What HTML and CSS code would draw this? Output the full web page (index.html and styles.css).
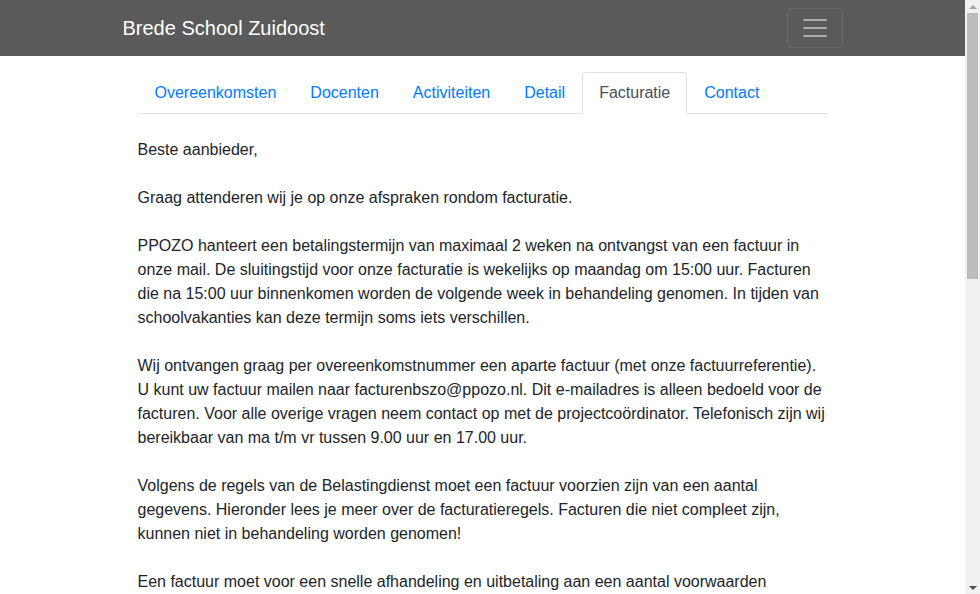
FILE: index.html
```html
<!DOCTYPE html>
<html lang="nl">
<head>
<meta charset="utf-8">
<title>Brede School Zuidoost</title>
<link rel="stylesheet" href="styles.css">
</head>
<body>
<div class="page">
  <nav class="navbar">
    <div class="container navbar-inner">
      <a class="brand" href="#">Brede School Zuidoost</a>
      <button class="toggler" type="button" aria-label="Menu">
        <svg class="toggler-icon" viewBox="0 0 30 30" width="30" height="30"><path d="M4 7h22M4 15h22M4 23h22" stroke="rgba(255,255,255,0.5)" stroke-width="2" stroke-linecap="round" stroke-miterlimit="10" fill="none"/></svg>
      </button>
    </div>
  </nav>
  <main class="container main">
    <ul class="tabs">
      <li class="tab-item"><a class="tab-link" href="#">Overeenkomsten</a></li>
      <li class="tab-item"><a class="tab-link" href="#">Docenten</a></li>
      <li class="tab-item"><a class="tab-link" href="#">Activiteiten</a></li>
      <li class="tab-item"><a class="tab-link" href="#">Detail</a></li>
      <li class="tab-item"><a class="tab-link active" href="#">Facturatie</a></li>
      <li class="tab-item"><a class="tab-link" href="#">Contact</a></li>
    </ul>
    <div class="content">
      <p>Beste aanbieder,</p>
      <p>Graag attenderen wij je op onze afspraken rondom facturatie.</p>
      <p>PPOZO hanteert een betalingstermijn van maximaal 2 weken na ontvangst van een factuur in onze mail. De sluitingstijd voor onze facturatie is wekelijks op maandag om 15:00 uur. Facturen die na 15:00 uur binnenkomen worden de volgende week in behandeling genomen. In tijden van schoolvakanties kan deze termijn soms iets verschillen.</p>
      <p>Wij ontvangen graag per overeenkomstnummer een aparte factuur (met onze factuurreferentie). U kunt uw factuur mailen naar facturenbszo@ppozo.nl. Dit e-mailadres is alleen bedoeld voor de facturen. Voor alle overige vragen neem contact op met de projectcoördinator. Telefonisch zijn wij bereikbaar van ma t/m vr tussen 9.00 uur en 17.00 uur.</p>
      <p>Volgens de regels van de Belastingdienst moet een factuur voorzien zijn van een aantal gegevens. Hieronder lees je meer over de facturatieregels. Facturen die niet compleet zijn, kunnen niet in behandeling worden genomen!</p>
      <p>Een factuur moet voor een snelle afhandeling en uitbetaling aan een aantal voorwaarden voldoen:</p>
    </div>
  </main>
</div>
<div class="scrollbar" aria-hidden="true">
  <div class="sb-arrow sb-up"></div>
  <div class="sb-track"><div class="sb-thumb"></div></div>
  <div class="sb-arrow sb-down"></div>
</div>
</body>
</html>
```
FILE: styles.css
```css
* { box-sizing: border-box; }
html, body { margin: 0; padding: 0; }
html { overflow: hidden; }
body {
  font-family: "Liberation Sans", Arial, sans-serif;
  font-size: 16px;
  line-height: 1.5;
  color: #212529;
  background: #fff;
  display: flex;
  height: 100vh;
  overflow: hidden;
}
.page {
  flex: 1;
  min-width: 0;
  height: 100%;
  overflow: hidden;
}
.container {
  width: 720px;
  margin: 0 auto;
}
.navbar {
  background: #5a5a5a;
  padding: 8px 0;
}
.navbar-inner {
  display: flex;
  align-items: center;
  justify-content: space-between;
}
.brand {
  color: #fff;
  font-size: 20px;
  line-height: 30px;
  padding: 5px 0;
  text-decoration: none;
}
.toggler {
  width: 56px;
  height: 40px;
  padding: 4px 12px;
  background: transparent;
  border: 1px solid rgba(255,255,255,0.1);
  border-radius: 4px;
  display: flex;
  align-items: center;
  justify-content: center;
}
.toggler-icon { display: block; }
.main {
  padding: 16px 15px 40px;
}
.tabs {
  list-style: none;
  margin: 0;
  padding: 0;
  display: flex;
  border-bottom: 1px solid #dee2e6;
}
.tab-item { margin-bottom: -1px; }
.tab-link {
  display: block;
  padding: 8px 16px;
  border: 1px solid transparent;
  border-top-left-radius: 4px;
  border-top-right-radius: 4px;
  color: #007bff;
  text-decoration: none;
}
.tab-link.active {
  color: #495057;
  background: #fff;
  border-color: #dee2e6 #dee2e6 #fff;
}
.content { padding-top: 24px; }
.content p { margin: 0 0 24px; }

.scrollbar {
  width: 15px;
  flex: none;
  height: 100%;
  background: #f1f1f1;
  display: flex;
  flex-direction: column;
}
.sb-arrow {
  height: 13px;
  flex: none;
  display: flex;
  justify-content: center;
  align-items: center;
}
.sb-up::before {
  content: "";
  border-left: 4px solid transparent;
  border-right: 4px solid transparent;
  border-bottom: 4px solid #a3a3a3;
}
.sb-down::before {
  content: "";
  border-left: 4px solid transparent;
  border-right: 4px solid transparent;
  border-top: 4px solid #505050;
}
.sb-track {
  flex: 1;
  padding: 0 2px;
}
.sb-thumb {
  height: 266px;
  background: #bcbcbc;
}
```
